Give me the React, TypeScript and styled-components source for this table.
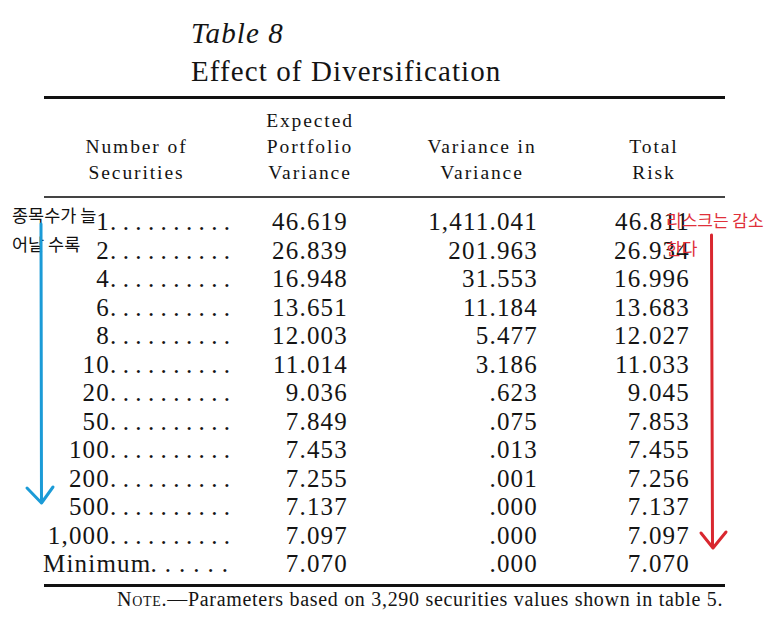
import React from "react";
import styled, { createGlobalStyle } from "styled-components";

const Global = createGlobalStyle`
  html, body { margin: 0; padding: 0; background: #fff; }
  body { font-family: "Liberation Serif", "Times New Roman", serif; color: #141414; }
`;

const Page = styled.div`
  position: relative;
  width: 764px;
  height: 629px;
  padding-top: 14px;
  box-sizing: border-box;
  overflow: hidden;
`;

const Title = styled.div`
  margin-left: 191px;
  font-size: 29px;
  line-height: 38px;
  letter-spacing: 1.1px;
`;

const TitleLine = styled.div<{ $italic?: boolean }>`
  font-style: ${(p) => (p.$italic ? "italic" : "normal")};
  white-space: nowrap;
`;

const TableWrap = styled.div`
  margin-left: 44px;
  width: 681px;
`;

const Rule = styled.div<{ $w: number; $top: number; $color?: string }>`
  margin-top: ${(p) => p.$top}px;
  height: 0;
  border-top: ${(p) => p.$w}px solid ${(p) => p.$color || "#111"};
  width: 681px;
`;

const Grid = styled.div`
  display: grid;
  grid-template-columns: 185px 162px 182px 162px;
`;

const HeadRow = styled(Grid)`
  padding: 9px 0 10px;
  align-items: end;
`;

const HeadCell = styled.div`
  font-size: 19.5px;
  line-height: 26px;
  letter-spacing: 1.9px;
  text-align: center;
  white-space: nowrap;
`;

const Body = styled.div`
  padding-top: 10px;
`;

const Row = styled(Grid)`
  font-size: 25px;
  line-height: 28.5px;
  letter-spacing: 1.2px;
`;

const LabelCell = styled.div`
  display: flex;
  align-items: baseline;
  margin-left: -1px;
`;

const LabelNum = styled.span`
  min-width: 67px;
  text-align: right;
  white-space: nowrap;
`;

const Leader = styled.span<{ $spread: number }>`
  margin-left: auto;
  letter-spacing: ${(p) => p.$spread}px;
  margin-right: -${(p) => p.$spread - 1}px;
  white-space: nowrap;
`;

const NumCell = styled.div<{ $pr: number }>`
  text-align: right;
  padding-right: ${(p) => p.$pr}px;
  white-space: nowrap;
`;

const Note = styled.div`
  margin-left: 73px;
  font-size: 20px;
  line-height: 24px;
  letter-spacing: 0.7px;
  white-space: nowrap;
`;

const SmallCaps = styled.span`
  font-variant: small-caps;
`;

const Annotation = styled.div<{ $left: number; $top: number; $color: string; $size: number; $lh: number }>`
  position: absolute;
  left: ${(p) => p.$left}px;
  top: ${(p) => p.$top}px;
  color: ${(p) => p.$color};
  font-family: "Noto Sans CJK KR", "Noto Sans", sans-serif;
  font-size: ${(p) => p.$size}px;
  line-height: ${(p) => p.$lh}px;
  white-space: nowrap;
`;

const Overlay = styled.svg`
  position: absolute;
  left: 0;
  top: 0;
  pointer-events: none;
`;

const rows: [string, string, string, string][] = [
  ["1", "46.619", "1,411.041", "46.811"],
  ["2", "26.839", "201.963", "26.934"],
  ["4", "16.948", "31.553", "16.996"],
  ["6", "13.651", "11.184", "13.683"],
  ["8", "12.003", "5.477", "12.027"],
  ["10", "11.014", "3.186", "11.033"],
  ["20", "9.036", ".623", "9.045"],
  ["50", "7.849", ".075", "7.853"],
  ["100", "7.453", ".013", "7.455"],
  ["200", "7.255", ".001", "7.256"],
  ["500", "7.137", ".000", "7.137"],
  ["1,000", "7.097", ".000", "7.097"],
  ["Minimum", "7.070", ".000", "7.070"],
];

export default function App() {
  return (
    <>
      <Global />
      <Page>
        <Title>
          <TitleLine $italic>Table 8</TitleLine>
          <TitleLine>Effect of Diversification</TitleLine>
        </Title>
        <TableWrap>
          <Rule $w={3} $top={6} />
          <HeadRow>
            <HeadCell>
              Number of
              <br />
              Securities
            </HeadCell>
            <HeadCell>
              Expected
              <br />
              Portfolio
              <br />
              Variance
            </HeadCell>
            <HeadCell>
              Variance in
              <br />
              Variance
            </HeadCell>
            <HeadCell>
              Total
              <br />
              Risk
            </HeadCell>
          </HeadRow>
          <Rule $w={2} $top={0} $color="#444" />
          <Body>
            {rows.map((r) => {
              const isMin = r[0] === "Minimum";
              return (
                <Row key={r[0]}>
                  <LabelCell>
                    <LabelNum>{r[0]}</LabelNum>
                    <Leader $spread={isMin ? 8 : 6.4}>{isMin ? "......" : ".........."}</Leader>
                  </LabelCell>
                  <NumCell $pr={43}>{r[1]}</NumCell>
                  <NumCell $pr={35}>{r[2]}</NumCell>
                  <NumCell $pr={45}>{r[3]}</NumCell>
                </Row>
              );
            })}
          </Body>
          <Rule $w={3} $top={5} />
          <Note>
            N<SmallCaps>ote</SmallCaps>.—Parameters based on 3,290 securities values shown in table 5.
          </Note>
        </TableWrap>

        <Annotation $left={12} $top={200} $color="#111" $size={17.5} $lh={29}>
          종목수가 늘
          <br />
          어날 수록
        </Annotation>
        <Annotation $left={666} $top={206} $color="#e0303a" $size={17} $lh={28}>
          리스크는 감소
          <br />
          한다
        </Annotation>

        <Overlay width={764} height={629} viewBox="0 0 764 629">
          <g fill="none" stroke="#1b9bd7" strokeWidth={3} strokeLinecap="round" strokeLinejoin="round">
            <line x1={41} y1={224} x2={41.5} y2={502} />
            <polyline points="27,488 41.5,503 53,487" />
          </g>
          <g fill="none" stroke="#d9272f" strokeWidth={3} strokeLinecap="round" strokeLinejoin="round">
            <line x1={711.5} y1={235} x2={712.5} y2={547} />
            <polyline points="701,533 713,548 726,532" />
          </g>
        </Overlay>
      </Page>
    </>
  );
}
